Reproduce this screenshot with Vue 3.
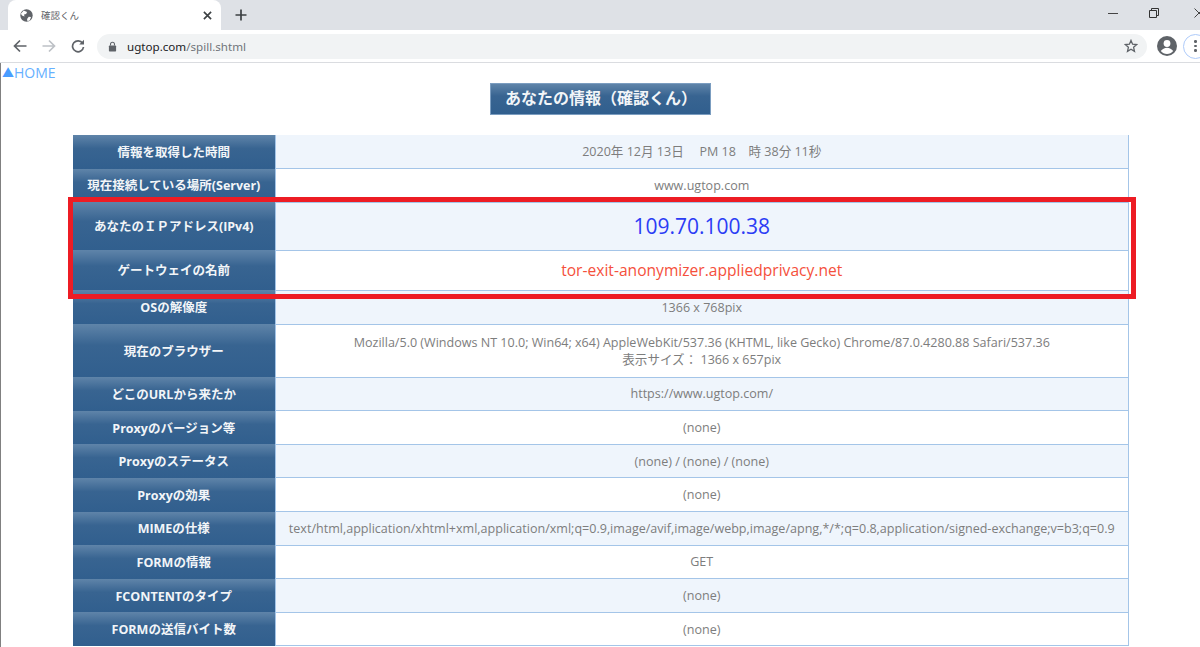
<template>
  <div class="window">
    <div class="tabstrip">
      <div class="tab">
        <svg class="favicon" viewBox="0 0 16 16" width="15" height="15">
          <circle cx="8" cy="8" r="6.6" fill="#5f6368" />
          <path d="M5 2.6 8.6 4.2 7.6 6.4 5.4 6.8 5.8 9 3.2 8 2 6.2zM10.4 9.4 12.8 9.6 11.6 13 9 14 8.6 11.6z" fill="#fff" />
        </svg>
        <span class="tab-title">確認くん</span>
        <svg class="tab-close" viewBox="0 0 10 10" width="9" height="9">
          <path d="M1 1 9 9M9 1 1 9" stroke="#3c4043" stroke-width="1.8" />
        </svg>
      </div>
      <svg class="new-tab" viewBox="0 0 12 12" width="12" height="12">
        <path d="M6 0.5V11.5M0.5 6H11.5" stroke="#3c4043" stroke-width="1.7" />
      </svg>
      <div class="win-controls">
        <svg viewBox="0 0 10 10" width="10" height="10"><path d="M0 5.5H10" stroke="#444" stroke-width="1" /></svg>
        <svg viewBox="0 0 10 10" width="10" height="10">
          <path d="M0.5 2.5H7.5V9.5H0.5ZM2.5 2.5V0.5H9.5V7.5H7.5" fill="none" stroke="#333" stroke-width="1" />
        </svg>
        <svg class="win-close" viewBox="0 0 10 10" width="10" height="10"><path d="M0.5 0.5 9.5 9.5M9.5 0.5 0.5 9.5" stroke="#444" stroke-width="1" /></svg>
      </div>
    </div>

    <div class="toolbar">
      <svg class="nav-icon" viewBox="0 0 14 14" width="14" height="14">
        <path d="M13.5 7H1.5M7 1.5 1.5 7 7 12.5" fill="none" stroke="#5f6368" stroke-width="1.7" />
      </svg>
      <svg class="nav-icon" viewBox="0 0 14 14" width="14" height="14">
        <path d="M0.5 7H12.5M7 1.5 12.5 7 7 12.5" fill="none" stroke="#bdc1c6" stroke-width="1.7" />
      </svg>
      <svg class="nav-icon" viewBox="0 0 14 14" width="14" height="14">
        <path d="M11.6 4.2A5.5 5.5 0 1 0 12.5 8" fill="none" stroke="#5f6368" stroke-width="1.7" />
        <path d="M13 0.8V5.6H8.2Z" fill="#5f6368" />
      </svg>
      <div class="omnibox">
        <svg viewBox="0 0 10 12" width="9" height="11">
          <path d="M2.8 5V3.4a2.2 2.2 0 0 1 4.4 0V5" fill="none" stroke="#5f6368" stroke-width="1.2" />
          <rect x="1" y="5" width="8" height="6.5" rx="0.8" fill="#5f6368" />
        </svg>
        <span class="url"><span class="url-host">ugtop.com</span>/spill.shtml</span>
        <svg class="star" viewBox="0 0 14 14" width="14" height="14">
          <path d="M7 1.4 8.6 5.2 12.7 5.6 9.6 8.3 10.5 12.4 7 10.2 3.5 12.4 4.4 8.3 1.3 5.6 5.4 5.2Z" fill="none" stroke="#5f6368" stroke-width="1.3" />
        </svg>
      </div>
      <svg class="avatar" viewBox="0 0 20 20" width="20" height="20">
        <circle cx="10" cy="10" r="10" fill="#5f6368" />
        <circle cx="10" cy="7.5" r="3.4" fill="#fff" />
        <path d="M3.8 15a7.6 7.6 0 0 1 12.4 0 7.8 7.8 0 0 1-12.4 0Z" fill="#fff" />
      </svg>
      <div class="menu-btn"><i></i><i></i><i></i></div>
    </div>

    <div class="page">
      <a class="home"><span class="home-arrow">▲</span>HOME</a>
      <div class="heading-row">
        <h1 class="heading">あなたの情報（確認くん）</h1>
      </div>
      <table class="info">
        <tbody>
          <tr v-for="(row, i) in rows" :key="row.label" :class="[row.cls, i % 2 === 0 ? 'odd' : 'even']">
            <th>{{ row.label }}</th>
            <td>
              <div v-for="line in row.value" :key="line">{{ line }}</div>
            </td>
          </tr>
        </tbody>
      </table>
      <div class="highlight"></div>
    </div>
  </div>
</template>

<script setup>
const rows = [
  { label: '情報を取得した時間', value: ['2020年 12月 13日\u3000 PM 18\u3000時 38分 11秒'] },
  { label: '現在接続している場所(Server)', value: ['www.ugtop.com'] },
  { label: 'あなたのＩＰアドレス(IPv4)', value: ['109.70.100.38'], cls: 'ip' },
  { label: 'ゲートウェイの名前', value: ['tor-exit-anonymizer.appliedprivacy.net'], cls: 'host' },
  { label: 'OSの解像度', value: ['1366 x 768pix'], cls: 'os' },
  {
    label: '現在のブラウザー',
    value: [
      'Mozilla/5.0 (Windows NT 10.0; Win64; x64) AppleWebKit/537.36 (KHTML, like Gecko) Chrome/87.0.4280.88 Safari/537.36',
      '表示サイズ： 1366 x 657pix'
    ],
    cls: 'browser'
  },
  { label: 'どこのURLから来たか', value: ['https://www.ugtop.com/'] },
  { label: 'Proxyのバージョン等', value: ['(none)'] },
  { label: 'Proxyのステータス', value: ['(none) / (none) / (none)'] },
  { label: 'Proxyの効果', value: ['(none)'] },
  {
    label: 'MIMEの仕様',
    value: ['text/html,application/xhtml+xml,application/xml;q=0.9,image/avif,image/webp,image/apng,*/*;q=0.8,application/signed-exchange;v=b3;q=0.9']
  },
  { label: 'FORMの情報', value: ['GET'] },
  { label: 'FCONTENTのタイプ', value: ['(none)'] },
  { label: 'FORMの送信バイト数', value: ['(none)'] }
]
</script>

<style>
html, body {
  margin: 0;
  height: 647px;
  overflow: hidden;
  background: #fff;
}
</style>

<style scoped>
.window {
  width: 1200px;
  height: 647px;
  overflow: hidden;
  font-family: "Noto Sans", "Noto Sans CJK JP", sans-serif;
}

.tabstrip {
  height: 30px;
  background: #dee1e6;
  display: flex;
  align-items: center;
}

.tab {
  margin-left: 8px;
  width: 213px;
  height: 30px;
  box-sizing: border-box;
  background: #fff;
  border-radius: 8px 8px 0 0;
  display: flex;
  align-items: center;
  padding: 0 9px 0 11px;
}

.tab-title {
  margin-left: 7px;
  font-size: 9.5px;
  color: #5f6368;
  flex: 1;
}

.new-tab {
  margin-left: 14px;
}

.win-controls {
  margin-left: auto;
  margin-right: -4px;
  margin-bottom: 5px;
  display: flex;
  gap: 31px;
  align-items: center;
}

.win-close {
  margin-left: 4px;
}

.toolbar {
  height: 32px;
  background: #fff;
  border-bottom: 1px solid #dadce0;
  display: flex;
  align-items: center;
  padding-left: 13px;
}

.nav-icon {
  flex: none;
  margin-right: 15px;
}

.omnibox {
  margin-left: -3px;
  width: 1050px;
  flex: none;
  height: 25px;
  border-radius: 13px;
  background: #f1f3f4;
  display: flex;
  align-items: center;
  padding: 0 9px 0 11px;
  box-sizing: border-box;
}

.url {
  margin-left: 10px;
  font-size: 11.6px;
  color: #70757a;
  flex: 1;
}

.url-host {
  color: #202124;
}

.avatar {
  flex: none;
  margin-left: 10px;
}

.menu-btn {
  margin-left: 6px;
  width: 25px;
  height: 25px;
  flex: none;
  box-sizing: border-box;
  border: 1px solid #aecbfa;
  border-radius: 50%;
  display: flex;
  flex-direction: column;
  align-items: center;
  justify-content: center;
  gap: 2px;
}

.menu-btn i {
  width: 2.5px;
  height: 2.5px;
  border-radius: 50%;
  background: #5f6368;
}

.page {
  position: relative;
  height: 584px;
  border-left: 1px solid #808080;
  box-sizing: border-box;
  font-family: "Open Sans", "Noto Sans CJK JP", sans-serif;
}

.home {
  display: block;
  height: 20px;
  padding-left: 1px;
  line-height: 20px;
  font-size: 14px;
  color: #66b0ff;
}

.home-arrow {
  color: #4a9dff;
  font-size: 12px;
}

.heading-row {
  display: flex;
  justify-content: center;
}

.heading {
  margin: 0;
  width: 221px;
  height: 32px;
  box-sizing: border-box;
  padding-left: 14px;
  border: 1px solid #7b9dc0;
  background: linear-gradient(#5f84a9, #386491 40%, #315f8e);
  color: #f2f5f8;
  font-size: 16px;
  font-weight: 700;
  line-height: 29px;
  white-space: nowrap;
}

.info {
  margin: 20px 0 0 72px;
  width: 1056px;
  border-collapse: collapse;
  table-layout: fixed;
}

.info tr {
  height: 33.6px;
}

.info tr.ip {
  height: 48px;
}

.info tr.host {
  height: 40px;
}

.info tr.os {
  height: 34px;
}

.info tr.browser {
  height: 53px;
}

.info th {
  width: 202px;
  padding: 0 0 1px;
  box-sizing: border-box;
  background: linear-gradient(#5f84a9, #386491 40%, #315f8e);
  color: #f2f5f8;
  font-size: 12.5px;
  font-weight: 700;
}

.info td {
  padding: 0;
  border: 1px solid #a4c5e8;
  text-align: center;
  color: #7d7d7d;
  font-size: 12.55px;
  line-height: 17px;
  white-space: nowrap;
}

.info tr:first-child td {
  border-top: none;
}

.info tr.odd td {
  background: #eff5fc;
}

.info tr.ip td {
  font-size: 21px;
  color: #2b3cf5;
  line-height: 30px;
}

.info tr.host td {
  font-size: 15.6px;
  color: #f5503c;
}

.highlight {
  position: absolute;
  left: 67px;
  top: 134px;
  width: 1068px;
  height: 102px;
  box-sizing: border-box;
  border: 5px solid #ed1c24;
  pointer-events: none;
}
</style>
